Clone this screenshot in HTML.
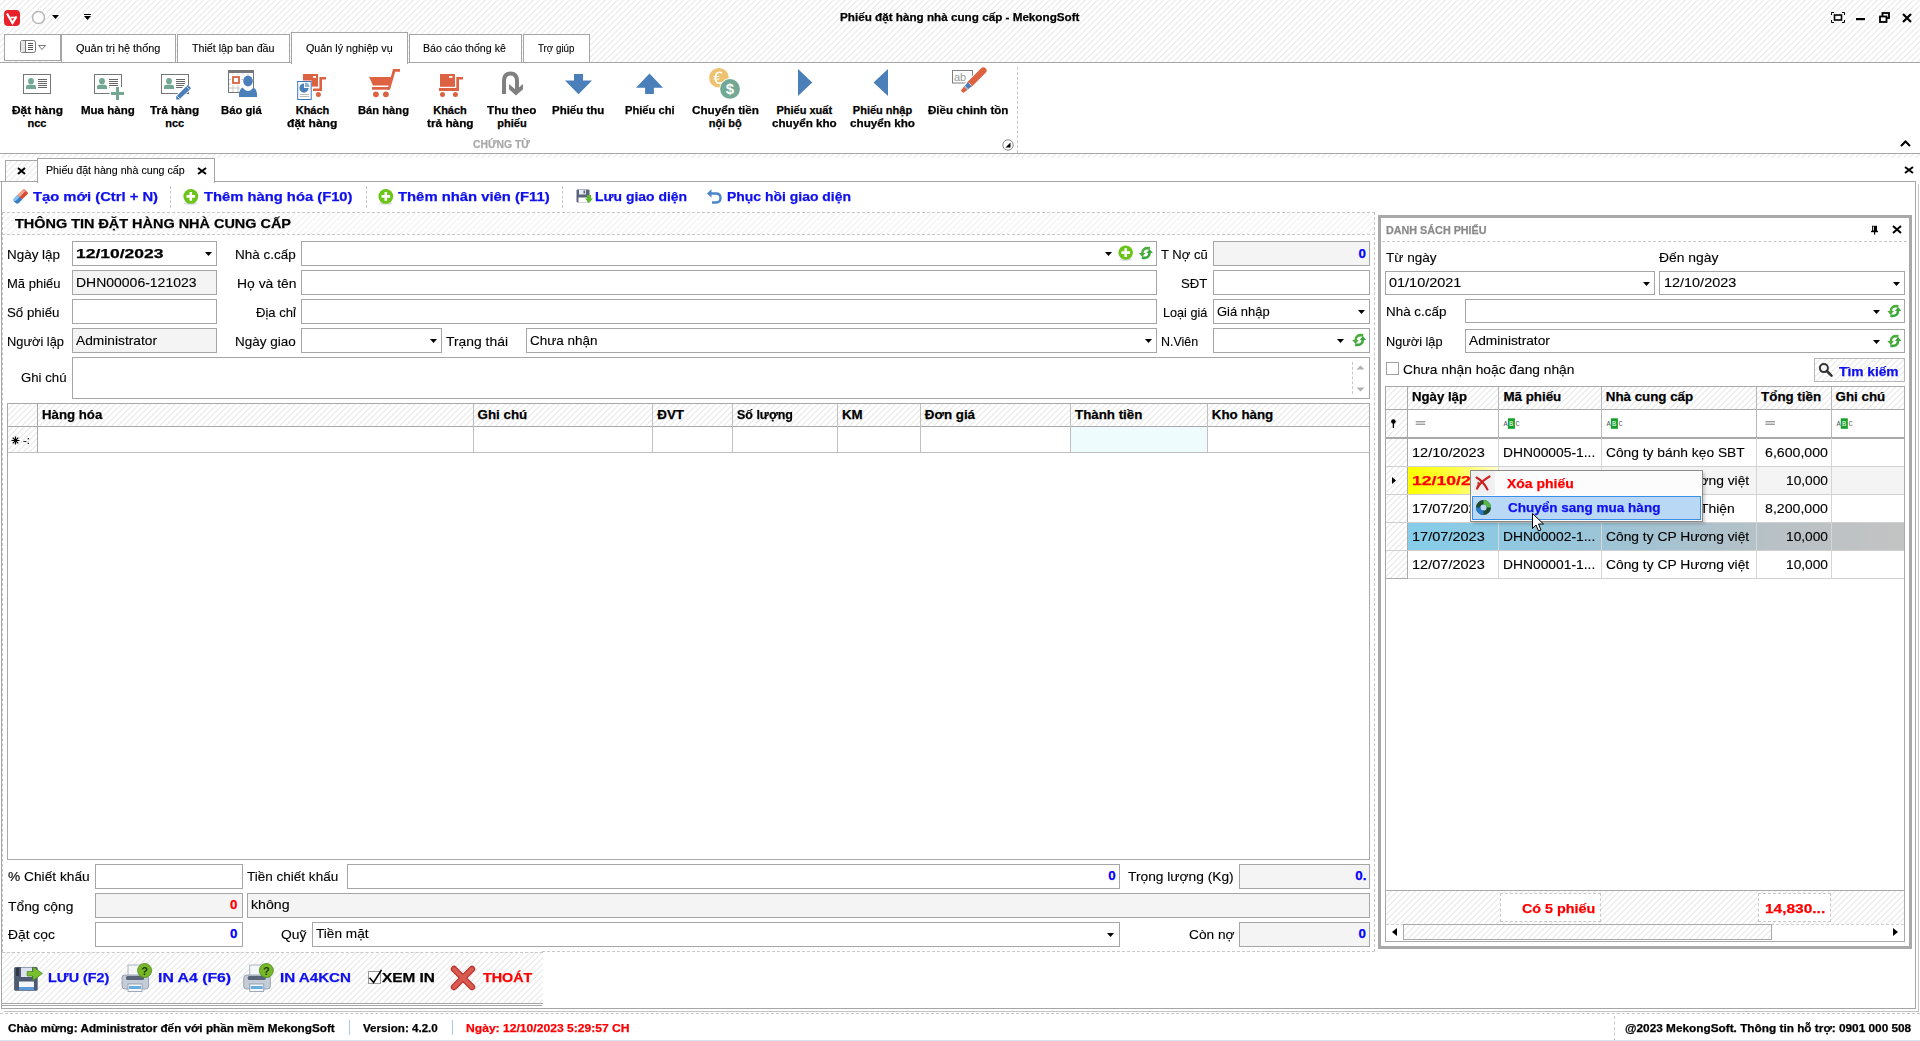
<!DOCTYPE html><html><head><meta charset="utf-8"><title>MekongSoft</title><style>
html,body{margin:0;padding:0;}
body{width:1920px;height:1041px;position:relative;overflow:hidden;background:#fff;font-family:'Liberation Sans', sans-serif;}
body>*{position:absolute;box-sizing:border-box;}
.t{white-space:pre;line-height:1;-webkit-text-stroke:0.12px currentColor;}
.b{-webkit-text-stroke:0.25px currentColor;}
.hatchxl{background-color:#fff;background-image:repeating-linear-gradient(135deg,rgba(255,255,255,0) 0px,rgba(255,255,255,0) 3.4px,#f4f4f4 3.4px,#f4f4f4 4.243px);}
.hatchd{background-color:#fff;background-image:repeating-linear-gradient(135deg,rgba(255,255,255,0) 0px,rgba(255,255,255,0) 3.4px,#e2e2e2 3.4px,#e2e2e2 4.243px);}
.hatch{background-color:#fff;background-image:repeating-linear-gradient(135deg,rgba(255,255,255,0) 0px,rgba(255,255,255,0) 3.4px,#efefef 3.4px,#efefef 4.243px);}
.hatchl{background-color:#fff;background-image:repeating-linear-gradient(135deg,rgba(255,255,255,0) 0px,rgba(255,255,255,0) 3.4px,#eeeeee 3.4px,#eeeeee 4.243px);}
</style></head><body>
<div style="left:0px;top:0px;width:1920px;height:62px;background:#fff;"></div>
<div class="hatch" style="left:0;top:0;width:1920px;height:62px"></div>
<svg style="left:4px;top:10px" width="16" height="16" viewBox="0 0 16 16"><rect x="0" y="0" width="16" height="16" rx="4" fill="#e8202a"/><path d="M3 3.5L8.5 13L12.5 6.5" stroke="#fff" stroke-width="2.2" fill="none"/><path d="M6.5 7.5H12.5" stroke="#fff" stroke-width="1.6"/></svg>
<svg style="left:31px;top:10px" width="15" height="15" viewBox="0 0 15 15"><circle cx="7.5" cy="7.5" r="6" fill="#fff" stroke="#b8b8b8" stroke-width="1.6"/></svg>
<svg style="left:52px;top:15px" width="7" height="4" viewBox="0 0 7 4"><path d="M0 0H7L3.5 4Z" fill="#000"/></svg>
<svg style="left:84px;top:14px" width="7" height="6" viewBox="0 0 7 6"><path d="M0 0H7V1H0Z M0 2H7L3.5 6Z" fill="#000"/></svg>
<span class="t b" style="left:839.70px;top:11.99px;font-size:11px;font-weight:700;color:#000;transform:scaleX(1.0620);transform-origin:0 0;">Phiếu đặt hàng nhà cung cấp - MekongSoft</span>
<svg style="left:1831px;top:12px" width="14" height="11" viewBox="0 0 14 11"><path d="M0.5 3V0.5H3 M11 0.5H13.5V3 M13.5 8V10.5H11 M3 10.5H0.5V8" stroke="#000" fill="none"/><rect x="3.5" y="3" width="7" height="5" fill="none" stroke="#000" stroke-width="1.6"/></svg>
<svg style="left:1856px;top:18px" width="10" height="3" viewBox="0 0 10 3"><rect x="0" y="0" width="9" height="2.2" fill="#000"/></svg>
<svg style="left:1879px;top:12px" width="11" height="11" viewBox="0 0 11 11"><rect x="3.5" y="1" width="6.5" height="5" fill="none" stroke="#000" stroke-width="1.8"/><rect x="1" y="4.5" width="6.5" height="5.5" fill="#fff" stroke="#000" stroke-width="1.8"/></svg>
<svg style="left:1902px;top:13px" width="10" height="10" viewBox="0 0 10 10"><path d="M1 1L9 9M9 1L1 9" stroke="#000" stroke-width="2.2"/></svg>
<div style="left:4px;top:34px;width:57px;height:27px;border:1px solid #a6a6a6;background:#fff;"></div>
<svg style="left:20px;top:40px" width="17" height="13" viewBox="0 0 17 13"><rect x="0.5" y="0.5" width="15" height="12" rx="2" fill="#fff" stroke="#777"/><path d="M5.5 0.5V12.5" stroke="#777"/><rect x="1" y="1" width="4" height="11" fill="#e6e6e6"/><path d="M8 3.5H13M8 5.5H13M8 7.5H13M8 9.5H13" stroke="#555"/></svg>
<svg style="left:38px;top:45px" width="8" height="5" viewBox="0 0 8 5"><path d="M0.5 0.5H7.5L4 4.5Z" fill="#fff" stroke="#777"/></svg>
<div style="left:61px;top:34px;width:115px;height:29px;border:1px solid #a6a6a6;background:#fff;"></div>
<div style="left:177px;top:34px;width:113px;height:29px;border:1px solid #a6a6a6;background:#fff;"></div>
<div style="left:409px;top:34px;width:113px;height:29px;border:1px solid #a6a6a6;background:#fff;"></div>
<div style="left:523px;top:34px;width:67px;height:29px;border:1px solid #a6a6a6;background:#fff;"></div>
<div style="left:0px;top:62px;width:1920px;height:0;border-top:1px solid #a6a6a6"></div>
<div style="left:291px;top:32px;width:117px;height:32px;border:1px solid #a6a6a6;background:#fff;border-bottom:none;"></div>
<span class="t" style="left:75.50px;top:43.19px;font-size:11px;font-weight:400;color:#000;transform:scaleX(0.9928);transform-origin:0 0;">Quản trị hệ thống</span>
<span class="t" style="left:191.70px;top:43.19px;font-size:11px;font-weight:400;color:#000;transform:scaleX(0.9704);transform-origin:0 0;">Thiết lập ban đầu</span>
<span class="t" style="left:305.80px;top:43.19px;font-size:11px;font-weight:400;color:#000;transform:scaleX(0.9778);transform-origin:0 0;">Quản lý nghiệp vụ</span>
<span class="t" style="left:423.30px;top:43.19px;font-size:11px;font-weight:400;color:#000;transform:scaleX(0.9682);transform-origin:0 0;">Báo cáo thống kê</span>
<span class="t" style="left:537.80px;top:43.19px;font-size:11px;font-weight:400;color:#000;transform:scaleX(0.8868);transform-origin:0 0;">Trợ giúp</span>
<div style="left:0px;top:153px;width:1920px;height:0;border-top:1px solid #a6a6a6"></div>
<div style="left:1017px;top:67px;width:0;height:86px;border-left:1px dashed #c8c8c8"></div>
<span class="t b" style="left:473.20px;top:138.69px;font-size:11px;font-weight:700;color:#a9a9a9;transform:scaleX(0.9417);transform-origin:0 0;">CHỨNG TỪ</span>
<svg style="left:1002px;top:139px" width="12" height="12" viewBox="0 0 12 12"><circle cx="6" cy="6" r="5.2" fill="#fff" stroke="#888"/><path d="M3.5 8.5H8.5V3.5Z" fill="#000"/></svg>
<svg style="left:1900px;top:140px" width="11" height="7" viewBox="0 0 11 7"><path d="M1 6L5.5 1.5L10 6" stroke="#000" stroke-width="2" fill="none"/></svg>
<span class="t b" style="left:11.50px;top:105.29px;font-size:11px;font-weight:700;color:#000;transform:scaleX(1.0837);transform-origin:0 0;">Đặt hàng</span>
<span class="t b" style="left:27.52px;top:118.29px;font-size:11px;font-weight:700;color:#000;">ncc</span>
<span class="t b" style="left:80.65px;top:105.29px;font-size:11px;font-weight:700;color:#000;transform:scaleX(1.0459);transform-origin:0 0;">Mua hàng</span>
<span class="t b" style="left:150.05px;top:105.29px;font-size:11px;font-weight:700;color:#000;transform:scaleX(1.0754);transform-origin:0 0;">Trả hàng</span>
<span class="t b" style="left:165.22px;top:118.29px;font-size:11px;font-weight:700;color:#000;">ncc</span>
<span class="t b" style="left:220.95px;top:105.29px;font-size:11px;font-weight:700;color:#000;transform:scaleX(1.0243);transform-origin:0 0;">Báo giá</span>
<span class="t b" style="left:295.69px;top:105.29px;font-size:11px;font-weight:700;color:#000;">Khách</span>
<span class="t b" style="left:287.30px;top:118.29px;font-size:11px;font-weight:700;color:#000;transform:scaleX(1.0994);transform-origin:0 0;">đặt hàng</span>
<span class="t b" style="left:358.30px;top:105.29px;font-size:11px;font-weight:700;color:#000;transform:scaleX(1.0175);transform-origin:0 0;">Bán hàng</span>
<span class="t b" style="left:433.19px;top:105.29px;font-size:11px;font-weight:700;color:#000;">Khách</span>
<span class="t b" style="left:426.70px;top:118.29px;font-size:11px;font-weight:700;color:#000;transform:scaleX(1.0736);transform-origin:0 0;">trả hàng</span>
<span class="t b" style="left:487.30px;top:105.29px;font-size:11px;font-weight:700;color:#000;transform:scaleX(1.0638);transform-origin:0 0;">Thu theo</span>
<span class="t b" style="left:497.33px;top:118.29px;font-size:11px;font-weight:700;color:#000;">phiếu</span>
<span class="t b" style="left:552.05px;top:105.29px;font-size:11px;font-weight:700;color:#000;transform:scaleX(1.0437);transform-origin:0 0;">Phiếu thu</span>
<span class="t b" style="left:625.20px;top:105.29px;font-size:11px;font-weight:700;color:#000;transform:scaleX(1.0142);transform-origin:0 0;">Phiếu chi</span>
<span class="t b" style="left:691.70px;top:105.29px;font-size:11px;font-weight:700;color:#000;transform:scaleX(1.0643);transform-origin:0 0;">Chuyển tiền</span>
<span class="t b" style="left:708.70px;top:118.29px;font-size:11px;font-weight:700;color:#000;">nội bộ</span>
<span class="t b" style="left:776.49px;top:105.29px;font-size:11px;font-weight:700;color:#000;">Phiếu xuất</span>
<span class="t b" style="left:771.95px;top:118.29px;font-size:11px;font-weight:700;color:#000;transform:scaleX(1.0585);transform-origin:0 0;">chuyển kho</span>
<span class="t b" style="left:852.86px;top:105.29px;font-size:11px;font-weight:700;color:#000;">Phiếu nhập</span>
<span class="t b" style="left:850.00px;top:118.29px;font-size:11px;font-weight:700;color:#000;transform:scaleX(1.0634);transform-origin:0 0;">chuyển kho</span>
<span class="t b" style="left:928.30px;top:105.29px;font-size:11px;font-weight:700;color:#000;transform:scaleX(1.0525);transform-origin:0 0;">Điều chinh tồn</span>
<div class="hatchl" style="left:0;top:154px;width:1920px;height:4px"></div>
<div class="hatch" style="left:5px;top:160px;width:33px;height:22px;border:1px solid #a6a6a6;border-bottom:none"></div>
<svg style="left:17px;top:167px" width="9" height="8" viewBox="0 0 9 8"><path d="M1 1L8 7M8 1L1 7" stroke="#000" stroke-width="2"/></svg>
<div style="left:37px;top:158px;width:178px;height:25px;border:1px solid #a6a6a6;background:#fff;border-bottom:none;"></div>
<span class="t" style="left:46.30px;top:164.89px;font-size:11px;font-weight:400;color:#000;transform:scaleX(0.9691);transform-origin:0 0;">Phiếu đặt hàng nhà cung cấp</span>
<svg style="left:197px;top:167px" width="10" height="8" viewBox="0 0 10 8"><path d="M1 1L9 7M9 1L1 7" stroke="#000" stroke-width="2"/></svg>
<svg style="left:1904px;top:166px" width="10" height="8" viewBox="0 0 10 8"><path d="M1 1L9 7M9 1L1 7" stroke="#000" stroke-width="2"/></svg>
<div style="left:214px;top:181px;width:1702px;height:0;border-top:1px solid #a6a6a6"></div>
<div style="left:0px;top:181px;width:37px;height:0;border-top:1px solid #a6a6a6"></div>
<div style="left:1px;top:181px;width:0;height:827px;border-left:1px solid #a6a6a6"></div>
<div style="left:1915px;top:181px;width:0;height:827px;border-left:1px solid #a6a6a6"></div>
<div style="left:1918px;top:184px;width:0;height:827px;border-left:1px solid #c4c4c4"></div>
<div style="left:1px;top:1008px;width:1915px;height:0;border-top:1px solid #a6a6a6"></div>
<div style="left:4px;top:1011px;width:1915px;height:0;border-top:1px solid #c4c4c4"></div>
<div style="left:170px;top:186px;width:0;height:22px;border-left:1px dashed #c8c8c8"></div>
<div style="left:366px;top:186px;width:0;height:22px;border-left:1px dashed #c8c8c8"></div>
<div style="left:562px;top:186px;width:0;height:22px;border-left:1px dashed #c8c8c8"></div>
<span class="t b" style="left:32.50px;top:189.72px;font-size:13.33px;font-weight:700;color:#1010ee;transform:scaleX(1.1083);transform-origin:0 0;">Tạo mới (Ctrl + N)</span>
<span class="t b" style="left:203.70px;top:189.72px;font-size:13.33px;font-weight:700;color:#1010ee;transform:scaleX(1.1080);transform-origin:0 0;">Thêm hàng hóa (F10)</span>
<span class="t b" style="left:398.30px;top:189.72px;font-size:13.33px;font-weight:700;color:#1010ee;transform:scaleX(1.1131);transform-origin:0 0;">Thêm nhân viên (F11)</span>
<span class="t b" style="left:595.40px;top:189.72px;font-size:13.33px;font-weight:700;color:#1010ee;transform:scaleX(1.0438);transform-origin:0 0;">Lưu giao diện</span>
<span class="t b" style="left:726.80px;top:189.72px;font-size:13.33px;font-weight:700;color:#1010ee;transform:scaleX(1.0466);transform-origin:0 0;">Phục hồi giao diện</span>
<div class="hatchxl" style="left:2px;top:212px;width:1373px;height:23px;border:1px dashed #c8c8c8;border-left:none"></div>
<span class="t b" style="left:14.70px;top:217.42px;font-size:13.33px;font-weight:700;color:#000;transform:scaleX(1.0835);transform-origin:0 0;">THÔNG TIN ĐẶT HÀNG NHÀ CUNG CẤP</span>
<div style="left:2px;top:212px;width:0;height:740px;border-left:1px dashed #c8c8c8"></div>
<div style="left:1374px;top:212px;width:0;height:740px;border-left:1px dashed #c8c8c8"></div>
<div style="left:542px;top:951px;width:833px;height:0;border-top:1px dashed #c8c8c8"></div>
<span class="t" style="left:7.00px;top:247.72px;font-size:13.33px;font-weight:400;color:#000;transform:scaleX(1.0074);transform-origin:0 0;">Ngày lập</span>
<span class="t" style="left:7.00px;top:276.72px;font-size:13.33px;font-weight:400;color:#000;transform:scaleX(0.9755);transform-origin:0 0;">Mã phiếu</span>
<span class="t" style="left:7.00px;top:305.72px;font-size:13.33px;font-weight:400;color:#000;transform:scaleX(0.9976);transform-origin:0 0;">Số phiếu</span>
<span class="t" style="left:7.00px;top:334.72px;font-size:13.33px;font-weight:400;color:#000;transform:scaleX(0.9635);transform-origin:0 0;">Người lập</span>
<div style="left:72px;top:241px;width:145px;height:25px;border:1px solid #a6a6a6;background:#fff;"></div>
<div style="left:72px;top:270px;width:145px;height:25px;border:1px solid #a6a6a6;background:#f4f4f4;"></div>
<div style="left:72px;top:299px;width:145px;height:25px;border:1px solid #a6a6a6;background:#fff;"></div>
<div style="left:72px;top:328px;width:145px;height:25px;border:1px solid #a6a6a6;background:#f4f4f4;"></div>
<span class="t b" style="left:76.25px;top:246.72px;font-size:13.33px;font-weight:700;color:#000;transform:scaleX(1.3115);transform-origin:0 0;">12/10/2023</span>
<svg style="left:205.0px;top:252px" width="7" height="4" viewBox="0 0 7 4"><path d="M0 0H7L3.5 4Z" fill="#000"/></svg>
<span class="t" style="left:76.25px;top:275.52px;font-size:13.33px;font-weight:400;color:#000;transform:scaleX(1.0491);transform-origin:0 0;">DHN00006-121023</span>
<span class="t" style="left:75.75px;top:333.72px;font-size:13.33px;font-weight:400;color:#000;transform:scaleX(1.0316);transform-origin:0 0;">Administrator</span>
<span class="t" style="left:235.25px;top:247.72px;font-size:13.33px;font-weight:400;color:#000;transform:scaleX(1.0122);transform-origin:0 0;">Nhà c.cấp</span>
<span class="t" style="left:236.50px;top:276.72px;font-size:13.33px;font-weight:400;color:#000;transform:scaleX(1.0427);transform-origin:0 0;">Họ và tên</span>
<span class="t" style="left:256.00px;top:305.72px;font-size:13.33px;font-weight:400;color:#000;transform:scaleX(0.9816);transform-origin:0 0;">Địa chỉ</span>
<span class="t" style="left:235.25px;top:334.72px;font-size:13.33px;font-weight:400;color:#000;transform:scaleX(1.0120);transform-origin:0 0;">Ngày giao</span>
<div style="left:301px;top:241px;width:856px;height:25px;border:1px solid #a6a6a6;background:#fff;"></div>
<div style="left:301px;top:270px;width:856px;height:25px;border:1px solid #a6a6a6;background:#fff;"></div>
<div style="left:301px;top:299px;width:856px;height:25px;border:1px solid #a6a6a6;background:#fff;"></div>
<div style="left:301px;top:328px;width:141px;height:25px;border:1px solid #a6a6a6;background:#fff;"></div>
<svg style="left:1104.9px;top:252px" width="7" height="4" viewBox="0 0 7 4"><path d="M0 0H7L3.5 4Z" fill="#000"/></svg>
<svg style="left:429.5px;top:339px" width="7" height="4" viewBox="0 0 7 4"><path d="M0 0H7L3.5 4Z" fill="#000"/></svg>
<span class="t" style="left:446.00px;top:334.72px;font-size:13.33px;font-weight:400;color:#000;transform:scaleX(1.0417);transform-origin:0 0;">Trạng thái</span>
<div style="left:526px;top:328px;width:631px;height:25px;border:1px solid #a6a6a6;background:#fff;"></div>
<span class="t" style="left:530.00px;top:333.72px;font-size:13.33px;font-weight:400;color:#000;transform:scaleX(1.0115);transform-origin:0 0;">Chưa nhận</span>
<svg style="left:1144.5px;top:339px" width="7" height="4" viewBox="0 0 7 4"><path d="M0 0H7L3.5 4Z" fill="#000"/></svg>
<span class="t" style="left:1160.70px;top:247.72px;font-size:13.33px;font-weight:400;color:#000;transform:scaleX(0.9780);transform-origin:0 0;">T Nợ cũ</span>
<span class="t" style="left:1181.00px;top:276.72px;font-size:13.33px;font-weight:400;color:#000;transform:scaleX(0.9898);transform-origin:0 0;">SĐT</span>
<span class="t" style="left:1163.30px;top:305.72px;font-size:13.33px;font-weight:400;color:#000;transform:scaleX(0.9485);transform-origin:0 0;">Loại giá</span>
<span class="t" style="left:1161.30px;top:334.72px;font-size:13.33px;font-weight:400;color:#000;transform:scaleX(0.9355);transform-origin:0 0;">N.Viên</span>
<div style="left:1213px;top:241px;width:157px;height:25px;border:1px solid #a6a6a6;background:#f4f4f4;"></div>
<div style="left:1213px;top:270px;width:157px;height:25px;border:1px solid #a6a6a6;background:#fff;"></div>
<div style="left:1213px;top:299px;width:157px;height:25px;border:1px solid #a6a6a6;background:#fff;"></div>
<div style="left:1213px;top:328px;width:157px;height:25px;border:1px solid #a6a6a6;background:#fff;"></div>
<span class="t b" style="left:1358.58px;top:246.72px;font-size:13.33px;font-weight:700;color:#0000ff;">0</span>
<span class="t" style="left:1217.10px;top:304.72px;font-size:13.33px;font-weight:400;color:#000;transform:scaleX(0.9724);transform-origin:0 0;">Giá nhập</span>
<svg style="left:1357.5px;top:310px" width="7" height="4" viewBox="0 0 7 4"><path d="M0 0H7L3.5 4Z" fill="#000"/></svg>
<svg style="left:1337.3px;top:339px" width="7" height="4" viewBox="0 0 7 4"><path d="M0 0H7L3.5 4Z" fill="#000"/></svg>
<span class="t" style="left:20.75px;top:371.22px;font-size:13.33px;font-weight:400;color:#000;transform:scaleX(0.9905);transform-origin:0 0;">Ghi chú</span>
<div style="left:72px;top:357px;width:1298px;height:42px;border:1px solid #a6a6a6;background:#fff;"></div>
<div style="left:1352px;top:362px;width:0;height:32px;border-left:1px dashed #c8c8c8"></div>
<svg style="left:1356px;top:365px" width="9" height="5" viewBox="0 0 9 5"><path d="M0.5 4.5H8.5L4.5 0.5Z" fill="#b0b0b0"/></svg>
<svg style="left:1356px;top:387px" width="9" height="5" viewBox="0 0 9 5"><path d="M0.5 0.5H8.5L4.5 4.5Z" fill="#b0b0b0"/></svg>
<div style="left:7px;top:403px;width:1363px;height:457px;border:1px solid #a9a9a9;background:#fff;"></div>
<div class="hatchl" style="left:8px;top:404px;width:1361px;height:22px"></div>
<div class="hatchl" style="left:8px;top:426px;width:29px;height:26px"></div>
<div style="left:8px;top:426px;width:1361px;height:0;border-top:1px solid #a9a9a9"></div>
<div style="left:8px;top:452px;width:1361px;height:0;border-top:1px solid #c0c0c0"></div>
<div style="left:37px;top:404px;width:0;height:48px;border-left:1px solid #a9a9a9"></div>
<div style="left:473px;top:404px;width:0;height:48px;border-left:1px solid #c0c0c0"></div>
<div style="left:652px;top:404px;width:0;height:48px;border-left:1px solid #c0c0c0"></div>
<div style="left:732px;top:404px;width:0;height:48px;border-left:1px solid #c0c0c0"></div>
<div style="left:837px;top:404px;width:0;height:48px;border-left:1px solid #c0c0c0"></div>
<div style="left:920px;top:404px;width:0;height:48px;border-left:1px solid #c0c0c0"></div>
<div style="left:1070px;top:404px;width:0;height:48px;border-left:1px solid #c0c0c0"></div>
<div style="left:1207px;top:404px;width:0;height:48px;border-left:1px solid #c0c0c0"></div>
<div style="left:1071px;top:427px;width:136px;height:25px;background:#effcfd;"></div>
<span class="t b" style="left:42.20px;top:407.52px;font-size:13.33px;font-weight:700;color:#000;transform:scaleX(0.9931);transform-origin:0 0;">Hàng hóa</span>
<span class="t b" style="left:477.60px;top:407.52px;font-size:13.33px;font-weight:700;color:#000;">Ghi chú</span>
<span class="t b" style="left:657.30px;top:407.52px;font-size:13.33px;font-weight:700;color:#000;">ĐVT</span>
<span class="t b" style="left:736.70px;top:407.52px;font-size:13.33px;font-weight:700;color:#000;transform:scaleX(0.9355);transform-origin:0 0;">Số lượng</span>
<span class="t b" style="left:841.90px;top:407.52px;font-size:13.33px;font-weight:700;color:#000;">KM</span>
<span class="t b" style="left:924.80px;top:407.52px;font-size:13.33px;font-weight:700;color:#000;">Đơn giá</span>
<span class="t b" style="left:1075.00px;top:407.52px;font-size:13.33px;font-weight:700;color:#000;">Thành tiền</span>
<span class="t b" style="left:1211.80px;top:407.52px;font-size:13.33px;font-weight:700;color:#000;">Kho hàng</span>
<svg style="left:11px;top:436px" width="9" height="9" viewBox="0 0 9 9"><path d="M4.5 0.5V8.5M0.5 4.5H8.5M1.7 1.7L7.3 7.3M7.3 1.7L1.7 7.3" stroke="#000" stroke-width="1.2"/></svg>
<span class="t" style="left:23.00px;top:435.19px;font-size:11px;font-weight:400;color:#000;transform:scaleX(1.0394);transform-origin:0 0;">-:</span>
<span class="t" style="left:7.90px;top:870.42px;font-size:13.33px;font-weight:400;color:#000;transform:scaleX(1.0305);transform-origin:0 0;">% Chiết khấu</span>
<span class="t" style="left:7.90px;top:899.52px;font-size:13.33px;font-weight:400;color:#000;transform:scaleX(1.0384);transform-origin:0 0;">Tổng cộng</span>
<span class="t" style="left:7.90px;top:928.32px;font-size:13.33px;font-weight:400;color:#000;transform:scaleX(1.0379);transform-origin:0 0;">Đặt cọc</span>
<div style="left:95px;top:864px;width:148px;height:25px;border:1px solid #a6a6a6;background:#fff;"></div>
<div style="left:95px;top:893px;width:148px;height:25px;border:1px solid #a6a6a6;background:#f4f4f4;"></div>
<div style="left:95px;top:922px;width:148px;height:25px;border:1px solid #a6a6a6;background:#fff;"></div>
<span class="t b" style="left:230.08px;top:898.22px;font-size:13.33px;font-weight:700;color:#ff0000;">0</span>
<span class="t b" style="left:230.08px;top:927.22px;font-size:13.33px;font-weight:700;color:#0000ff;">0</span>
<span class="t" style="left:247.30px;top:870.42px;font-size:13.33px;font-weight:400;color:#000;transform:scaleX(1.0144);transform-origin:0 0;">Tiền chiết khấu</span>
<div style="left:347px;top:864px;width:773px;height:25px;border:1px solid #a6a6a6;background:#fff;"></div>
<span class="t b" style="left:1108.18px;top:869.22px;font-size:13.33px;font-weight:700;color:#0000ff;">0</span>
<div style="left:247px;top:893px;width:1123px;height:25px;border:1px solid #a6a6a6;background:#f4f4f4;"></div>
<span class="t" style="left:251.00px;top:898.22px;font-size:13.33px;font-weight:400;color:#000;transform:scaleX(1.0625);transform-origin:0 0;">không</span>
<span class="t" style="left:281.30px;top:928.32px;font-size:13.33px;font-weight:400;color:#000;transform:scaleX(1.0387);transform-origin:0 0;">Quỹ</span>
<div style="left:312px;top:922px;width:808px;height:25px;border:1px solid #a6a6a6;background:#fff;"></div>
<span class="t" style="left:316.25px;top:927.22px;font-size:13.33px;font-weight:400;color:#000;transform:scaleX(1.0222);transform-origin:0 0;">Tiền mặt</span>
<svg style="left:1107.4px;top:933px" width="7" height="4" viewBox="0 0 7 4"><path d="M0 0H7L3.5 4Z" fill="#000"/></svg>
<span class="t" style="left:1128.40px;top:870.42px;font-size:13.33px;font-weight:400;color:#000;transform:scaleX(1.0326);transform-origin:0 0;">Trọng lượng (Kg)</span>
<div style="left:1239px;top:864px;width:131px;height:25px;border:1px solid #a6a6a6;background:#f4f4f4;"></div>
<span class="t b" style="left:1355.28px;top:869.22px;font-size:13.33px;font-weight:700;color:#0000ff;">0.</span>
<span class="t" style="left:1188.50px;top:928.32px;font-size:13.33px;font-weight:400;color:#000;transform:scaleX(1.0268);transform-origin:0 0;">Còn nợ</span>
<div style="left:1239px;top:922px;width:131px;height:25px;border:1px solid #a6a6a6;background:#f4f4f4;"></div>
<span class="t b" style="left:1358.58px;top:927.22px;font-size:13.33px;font-weight:700;color:#0000ff;">0</span>
<div class="hatchl" style="left:2px;top:952px;width:541px;height:52px;border-top:1px dashed #c8c8c8;border-bottom:1px solid #a6a6a6"></div>
<div style="left:2px;top:1005px;width:540px;height:0;border-top:1px solid #a6a6a6"></div>
<span class="t b" style="left:47.50px;top:971.42px;font-size:13.33px;font-weight:700;color:#1010ee;transform:scaleX(1.0752);transform-origin:0 0;">LƯU (F2)</span>
<span class="t b" style="left:157.70px;top:971.42px;font-size:13.33px;font-weight:700;color:#1010ee;transform:scaleX(1.1844);transform-origin:0 0;">IN A4 (F6)</span>
<span class="t b" style="left:279.60px;top:971.42px;font-size:13.33px;font-weight:700;color:#1010ee;transform:scaleX(1.1369);transform-origin:0 0;">IN A4KCN</span>
<span class="t b" style="left:381.70px;top:971.42px;font-size:13.33px;font-weight:700;color:#000;transform:scaleX(1.1520);transform-origin:0 0;">XEM IN</span>
<span class="t b" style="left:483.00px;top:971.42px;font-size:13.33px;font-weight:700;color:#ff0000;transform:scaleX(1.0739);transform-origin:0 0;">THOÁT</span>
<div style="left:0px;top:1013px;width:1920px;height:0;border-top:1px dashed #c8c8c8"></div>
<span class="t b" style="left:8.00px;top:1022.69px;font-size:11px;font-weight:700;color:#000;transform:scaleX(1.0645);transform-origin:0 0;">Chào mừng: Administrator đến với phần mềm MekongSoft</span>
<div style="left:349px;top:1020px;width:0;height:15px;border-left:1px solid #a8c8e8"></div>
<span class="t b" style="left:362.70px;top:1022.69px;font-size:11px;font-weight:700;color:#000;transform:scaleX(1.0544);transform-origin:0 0;">Version: 4.2.0</span>
<div style="left:452px;top:1020px;width:0;height:15px;border-left:1px solid #a8c8e8"></div>
<span class="t b" style="left:466.00px;top:1022.69px;font-size:11px;font-weight:700;color:#ff0000;transform:scaleX(1.1010);transform-origin:0 0;">Ngày: 12/10/2023 5:29:57 CH</span>
<div style="left:1614px;top:1016px;width:0;height:25px;border-left:1px dashed #c8c8c8"></div>
<span class="t b" style="left:1624.60px;top:1022.69px;font-size:11px;font-weight:700;color:#000;transform:scaleX(1.0730);transform-origin:0 0;">@2023 MekongSoft. Thông tin hỗ trợ: 0901 000 508</span>
<div style="left:0px;top:1040px;width:1920px;height:0;border-top:1px solid #d4e4ee"></div>
<div style="left:1378px;top:215px;width:534px;height:734px;border:1px solid #a9a9a9;background:#fff;border-width:3px;"></div>
<span class="t b" style="left:1386.25px;top:224.99px;font-size:11px;font-weight:700;color:#8a8a8a;transform:scaleX(0.9797);transform-origin:0 0;">DANH SÁCH PHIẾU</span>
<div style="left:1382px;top:241px;width:525px;height:0;border-top:1px dashed #c8c8c8"></div>
<svg style="left:1870px;top:225px" width="9" height="10" viewBox="0 0 9 10"><rect x="2" y="0.8" width="5" height="5.6" fill="#000"/><rect x="2.9" y="1.5" width="0.9" height="4" fill="#fff"/><rect x="1" y="5.8" width="7" height="1.4" fill="#000"/><rect x="4" y="7" width="1.2" height="2.6" fill="#000"/></svg>
<svg style="left:1892px;top:225px" width="10" height="9" viewBox="0 0 10 9"><path d="M1 1L9 8M9 1L1 8" stroke="#000" stroke-width="2"/></svg>
<span class="t" style="left:1385.50px;top:251.02px;font-size:13.33px;font-weight:400;color:#000;transform:scaleX(1.0187);transform-origin:0 0;">Từ ngày</span>
<span class="t" style="left:1659.20px;top:251.02px;font-size:13.33px;font-weight:400;color:#000;transform:scaleX(1.0427);transform-origin:0 0;">Đến ngày</span>
<div style="left:1385px;top:271px;width:270px;height:24px;border:1px solid #a6a6a6;background:#fff;"></div>
<div style="left:1659px;top:271px;width:246px;height:24px;border:1px solid #a6a6a6;background:#fff;"></div>
<span class="t" style="left:1389.20px;top:276.12px;font-size:13.33px;font-weight:400;color:#000;transform:scaleX(1.0852);transform-origin:0 0;">01/10/2021</span>
<span class="t" style="left:1664.00px;top:276.12px;font-size:13.33px;font-weight:400;color:#000;transform:scaleX(1.0829);transform-origin:0 0;">12/10/2023</span>
<svg style="left:1643.1px;top:282px" width="7" height="4" viewBox="0 0 7 4"><path d="M0 0H7L3.5 4Z" fill="#000"/></svg>
<svg style="left:1892.7px;top:282px" width="7" height="4" viewBox="0 0 7 4"><path d="M0 0H7L3.5 4Z" fill="#000"/></svg>
<span class="t" style="left:1385.50px;top:305.22px;font-size:13.33px;font-weight:400;color:#000;transform:scaleX(1.0064);transform-origin:0 0;">Nhà c.cấp</span>
<span class="t" style="left:1385.50px;top:334.82px;font-size:13.33px;font-weight:400;color:#000;transform:scaleX(0.9551);transform-origin:0 0;">Người lập</span>
<div style="left:1465px;top:299px;width:440px;height:24px;border:1px solid #a6a6a6;background:#fff;"></div>
<div style="left:1465px;top:329px;width:440px;height:24px;border:1px solid #a6a6a6;background:#fff;"></div>
<span class="t" style="left:1469.00px;top:334.22px;font-size:13.33px;font-weight:400;color:#000;transform:scaleX(1.0304);transform-origin:0 0;">Administrator</span>
<svg style="left:1872.8px;top:310px" width="7" height="4" viewBox="0 0 7 4"><path d="M0 0H7L3.5 4Z" fill="#000"/></svg>
<svg style="left:1872.8px;top:340px" width="7" height="4" viewBox="0 0 7 4"><path d="M0 0H7L3.5 4Z" fill="#000"/></svg>
<div style="left:1386px;top:362px;width:13px;height:13px;border:1px solid #a0a0a0;background:#fff;"></div>
<span class="t" style="left:1403.30px;top:362.62px;font-size:13.33px;font-weight:400;color:#000;transform:scaleX(1.0322);transform-origin:0 0;">Chưa nhận hoặc đang nhận</span>
<div class="hatchl" style="left:1814px;top:358px;width:91px;height:24px;border:1px solid #b8b8b8"></div>
<span class="t b" style="left:1839.00px;top:365.12px;font-size:13.33px;font-weight:700;color:#1010ee;transform:scaleX(1.0315);transform-origin:0 0;">Tìm kiếm</span>
<div style="left:1385px;top:386px;width:520px;height:556px;border:1px solid #a9a9a9;background:#fff;"></div>
<div class="hatchl" style="left:1386px;top:387px;width:518px;height:22px"></div>
<div class="hatchl" style="left:1386px;top:409px;width:21px;height:169px"></div>
<div style="left:1408px;top:467px;width:496px;height:27px;background:#f4f4f4;"></div>
<div style="left:1408px;top:467px;width:90px;height:27px;background:linear-gradient(90deg,#ffff00 0%,#ffff40 50%,#ffffc8 100%);"></div>
<div style="left:1408px;top:523px;width:496px;height:27px;background:linear-gradient(90deg,#85cdea 0%,#93c7de 25%,#a8c2cf 55%,#b9c1c5 75%,#c3c3c3 100%)"></div>
<div style="left:1386px;top:409px;width:518px;height:0;border-top:1px solid #a9a9a9"></div>
<div style="left:1386px;top:437px;width:518px;height:0;border-top:2px solid #a9a9a9"></div>
<div style="left:1407px;top:387px;width:0;height:50px;border-left:1px solid #b8b8b8"></div>
<div style="left:1407px;top:438px;width:0;height:140px;border-left:1px solid #d6d6d6"></div>
<div style="left:1498px;top:387px;width:0;height:50px;border-left:1px solid #b8b8b8"></div>
<div style="left:1498px;top:438px;width:0;height:140px;border-left:1px solid #d6d6d6"></div>
<div style="left:1601px;top:387px;width:0;height:50px;border-left:1px solid #b8b8b8"></div>
<div style="left:1601px;top:438px;width:0;height:140px;border-left:1px solid #d6d6d6"></div>
<div style="left:1756px;top:387px;width:0;height:50px;border-left:1px solid #b8b8b8"></div>
<div style="left:1756px;top:438px;width:0;height:140px;border-left:1px solid #d6d6d6"></div>
<div style="left:1831px;top:387px;width:0;height:50px;border-left:1px solid #b8b8b8"></div>
<div style="left:1831px;top:438px;width:0;height:140px;border-left:1px solid #d6d6d6"></div>
<div style="left:1407px;top:387px;width:0;height:191px;border-left:1px solid #a9a9a9"></div>
<div style="left:1386px;top:466px;width:518px;height:0;border-top:1px solid #d0d0d0"></div>
<div style="left:1386px;top:494px;width:518px;height:0;border-top:1px solid #d0d0d0"></div>
<div style="left:1386px;top:522px;width:518px;height:0;border-top:1px solid #d0d0d0"></div>
<div style="left:1386px;top:550px;width:518px;height:0;border-top:1px solid #d0d0d0"></div>
<div style="left:1386px;top:578px;width:518px;height:0;border-top:1px solid #d0d0d0"></div>
<div style="left:1386px;top:578px;width:22px;height:0;border-top:1px solid #a9a9a9"></div>
<span class="t b" style="left:1412.00px;top:390.32px;font-size:13.33px;font-weight:700;color:#000;transform:scaleX(0.9899);transform-origin:0 0;">Ngày lập</span>
<span class="t b" style="left:1503.50px;top:390.32px;font-size:13.33px;font-weight:700;color:#000;">Mã phiếu</span>
<span class="t b" style="left:1605.75px;top:390.32px;font-size:13.33px;font-weight:700;color:#000;">Nhà cung cấp</span>
<span class="t b" style="left:1761.10px;top:390.32px;font-size:13.33px;font-weight:700;color:#000;">Tổng tiền</span>
<span class="t b" style="left:1835.60px;top:390.32px;font-size:13.33px;font-weight:700;color:#000;">Ghi chú</span>
<span class="t" style="left:1412.40px;top:445.52px;font-size:13.33px;font-weight:400;color:#000;transform:scaleX(1.0911);transform-origin:0 0;">12/10/2023</span>
<span class="t" style="left:1503.20px;top:445.52px;font-size:13.33px;font-weight:400;color:#000;transform:scaleX(1.0382);transform-origin:0 0;">DHN00005-1...</span>
<span class="t" style="left:1605.80px;top:445.52px;font-size:13.33px;font-weight:400;color:#000;transform:scaleX(1.0342);transform-origin:0 0;">Công ty bánh kẹo SBT</span>
<span class="t" style="left:1764.60px;top:445.52px;font-size:13.33px;font-weight:400;color:#000;transform:scaleX(1.0625);transform-origin:0 0;">6,600,000</span>
<span class="t b" style="left:1412.40px;top:473.52px;font-size:13.33px;font-weight:700;color:#ff0000;transform:scaleX(1.3190);transform-origin:0 0;">12/10/2023</span>
<span class="t" style="left:1503.20px;top:473.52px;font-size:13.33px;font-weight:400;color:#000;transform:scaleX(1.0382);transform-origin:0 0;">DHN00004-1...</span>
<span class="t" style="left:1605.80px;top:473.52px;font-size:13.33px;font-weight:400;color:#000;transform:scaleX(1.0364);transform-origin:0 0;">Công ty CP Hương việt</span>
<span class="t" style="left:1785.60px;top:473.52px;font-size:13.33px;font-weight:400;color:#000;transform:scaleX(1.0303);transform-origin:0 0;">10,000</span>
<span class="t" style="left:1412.40px;top:501.52px;font-size:13.33px;font-weight:400;color:#000;transform:scaleX(1.0911);transform-origin:0 0;">17/07/2023</span>
<span class="t" style="left:1503.20px;top:501.52px;font-size:13.33px;font-weight:400;color:#000;transform:scaleX(1.0382);transform-origin:0 0;">DHN00003-1...</span>
<span class="t" style="left:1605.80px;top:501.52px;font-size:13.33px;font-weight:400;color:#000;transform:scaleX(1.0379);transform-origin:0 0;">Công ty Thành Thiện</span>
<span class="t" style="left:1764.60px;top:501.52px;font-size:13.33px;font-weight:400;color:#000;transform:scaleX(1.0625);transform-origin:0 0;">8,200,000</span>
<span class="t" style="left:1412.40px;top:529.52px;font-size:13.33px;font-weight:400;color:#000;transform:scaleX(1.0911);transform-origin:0 0;">17/07/2023</span>
<span class="t" style="left:1503.20px;top:529.52px;font-size:13.33px;font-weight:400;color:#000;transform:scaleX(1.0382);transform-origin:0 0;">DHN00002-1...</span>
<span class="t" style="left:1605.80px;top:529.52px;font-size:13.33px;font-weight:400;color:#000;transform:scaleX(1.0364);transform-origin:0 0;">Công ty CP Hương việt</span>
<span class="t" style="left:1785.60px;top:529.52px;font-size:13.33px;font-weight:400;color:#000;transform:scaleX(1.0303);transform-origin:0 0;">10,000</span>
<span class="t" style="left:1412.40px;top:557.52px;font-size:13.33px;font-weight:400;color:#000;transform:scaleX(1.0911);transform-origin:0 0;">12/07/2023</span>
<span class="t" style="left:1503.20px;top:557.52px;font-size:13.33px;font-weight:400;color:#000;transform:scaleX(1.0382);transform-origin:0 0;">DHN00001-1...</span>
<span class="t" style="left:1605.80px;top:557.52px;font-size:13.33px;font-weight:400;color:#000;transform:scaleX(1.0364);transform-origin:0 0;">Công ty CP Hương việt</span>
<span class="t" style="left:1785.60px;top:557.52px;font-size:13.33px;font-weight:400;color:#000;transform:scaleX(1.0303);transform-origin:0 0;">10,000</span>
<svg style="left:1392px;top:477px" width="4" height="7" viewBox="0 0 4 7"><path d="M0 0L4 3.5L0 7Z" fill="#000"/></svg>
<div class="hatchl" style="left:1386px;top:890px;width:518px;height:34px;border-top:1px solid #a9a9a9"></div>
<div style="left:1500px;top:893px;width:101px;height:29px;border:1px solid #c8c8c8;background:#fff;border-style:dashed;"></div>
<div style="left:1758px;top:893px;width:73px;height:29px;border:1px solid #c8c8c8;background:#fff;border-style:dashed;"></div>
<span class="t b" style="left:1522.10px;top:902.22px;font-size:13.33px;font-weight:700;color:#ff0000;transform:scaleX(1.0745);transform-origin:0 0;">Có 5 phiếu</span>
<span class="t b" style="left:1765.40px;top:902.22px;font-size:13.33px;font-weight:700;color:#ff0000;transform:scaleX(1.1605);transform-origin:0 0;">14,830...</span>
<div style="left:1386px;top:924px;width:518px;height:0;border-top:1px dashed #d0d0d0"></div>
<div class="hatchl" style="left:1403px;top:924px;width:369px;height:16px;border:1px solid #a9a9a9"></div>
<svg style="left:1392px;top:928px" width="5" height="8" viewBox="0 0 5 8"><path d="M5 0L0 4L5 8Z" fill="#000"/></svg>
<svg style="left:1893px;top:928px" width="5" height="8" viewBox="0 0 5 8"><path d="M0 0L5 4L0 8Z" fill="#000"/></svg>
<div style="left:1473px;top:473px;width:232px;height:51px;background:rgba(0,0,0,0.18);filter:blur(1.5px)"></div>
<div style="left:1470px;top:470px;width:233px;height:52px;border:1px solid #8a8a8a;background:#fcfcfc;"></div>
<div style="left:1471px;top:471px;width:24px;height:24px;background:#f0f0f0;"></div>
<div style="left:1472px;top:496px;width:229px;height:24px;border:1px solid #3c8ee8;background:#b9d8f5;"></div>
<svg style="left:1474px;top:474px" width="20" height="18" viewBox="0 0 20 18"><path d="M4 12.5Q8 7 15.5 2.5" stroke="#d02828" stroke-width="2.2" fill="none" stroke-linecap="round"/><path d="M3 14.5Q5.5 11 4.5 9" stroke="#d02828" stroke-width="2.2" fill="none" stroke-linecap="round"/><path d="M2.5 3.5Q9 7 13.5 15.5" stroke="#c82020" stroke-width="2" fill="none" stroke-linecap="round"/></svg>
<svg style="left:1475px;top:499px" width="17" height="17" viewBox="0 0 17 17"><circle cx="8.5" cy="8.5" r="5.3" fill="none" stroke="#1e4a30" stroke-width="4.4"/><path d="M8.5 3.2A5.3 5.3 0 0 1 13.8 8.5" stroke="#58b848" stroke-width="4.4" fill="none"/><path d="M3.2 8.5A5.3 5.3 0 0 0 8.5 13.8" stroke="#2a78c8" stroke-width="4.4" fill="none"/><circle cx="8.5" cy="8.5" r="2.6" fill="#b9d8f5"/></svg>
<span class="t b" style="left:1506.70px;top:477.42px;font-size:13.33px;font-weight:700;color:#ff0000;transform:scaleX(1.0489);transform-origin:0 0;">Xóa phiếu</span>
<span class="t b" style="left:1507.70px;top:500.82px;font-size:13.33px;font-weight:700;color:#1010ee;transform:scaleX(1.0137);transform-origin:0 0;">Chuyển sang mua hàng</span>
<svg style="left:1532px;top:513px" width="12" height="19" viewBox="0 0 12 19"><path d="M0.5 0.5V15.5L4 12L6.5 18L9 17L6.5 11H11.5Z" fill="#fff" stroke="#000" stroke-width="1"/></svg>
<svg style="left:20px;top:70px" width="36" height="28" viewBox="20 70 36 28"><rect x="23.5" y="74.5" width="27" height="19" fill="#fff" stroke="#767676"/><ellipse cx="31" cy="81.2" rx="2.9" ry="3.1" fill="#71a793"/><path d="M26 89V86.6Q26 84.9 28.5 84.7H33.5Q36 84.9 36 86.6V89Z" fill="#71a793"/><rect x="38" y="79" width="9" height="1" fill="#666"/><rect x="38" y="81" width="9" height="1" fill="#666"/><rect x="38" y="83" width="9" height="1" fill="#666"/><rect x="38" y="85" width="9" height="1" fill="#666"/><rect x="38" y="87" width="9" height="1" fill="#666"/></svg>
<svg style="left:90px;top:70px" width="36" height="32" viewBox="90 70 36 32"><rect x="94.5" y="74.5" width="27" height="19" fill="#fff" stroke="#767676"/><ellipse cx="102" cy="81.2" rx="2.9" ry="3.1" fill="#71a793"/><path d="M97 89V86.6Q97 84.9 99.5 84.7H104.5Q107 84.9 107 86.6V89Z" fill="#71a793"/><rect x="109" y="79" width="9" height="1" fill="#666"/><rect x="109" y="81" width="9" height="1" fill="#666"/><rect x="109" y="83" width="9" height="1" fill="#666"/><rect x="109" y="85" width="9" height="1" fill="#666"/><rect x="109" y="87" width="9" height="1" fill="#666"/><rect x="109.5" y="87" width="14" height="9" fill="#fff"/><rect x="111" y="92" width="13" height="3" fill="#71a793"/><rect x="116" y="87" width="3" height="13" fill="#71a793"/></svg>
<svg style="left:158px;top:70px" width="36" height="32" viewBox="158 70 36 32"><rect x="161.5" y="74.5" width="27" height="19" fill="#fff" stroke="#767676"/><ellipse cx="169" cy="81.2" rx="2.9" ry="3.1" fill="#71a793"/><path d="M164 89V86.6Q164 84.9 166.5 84.7H171.5Q174 84.9 174 86.6V89Z" fill="#71a793"/><rect x="176" y="79" width="9" height="1" fill="#666"/><rect x="176" y="81" width="9" height="1" fill="#666"/><rect x="176" y="83" width="9" height="1" fill="#666"/><rect x="176" y="85" width="9" height="1" fill="#666"/><rect x="176" y="87" width="9" height="1" fill="#666"/><path d="M186 83L192 89L179 100H175.5V96.5Z" fill="#fff"/><path d="M188.5 85.5L190.5 87.5Q191.2 88.3 190.4 89L179.2 99.6H176.2V96.6L187.2 85.5Q187.9 84.8 188.5 85.5Z" fill="#4a7fb9"/><path d="M186.5 86.5L189.3 89.3M177.2 96.2L179.8 98.8" stroke="#fff" stroke-width="0.7"/></svg>
<svg style="left:226px;top:68px" width="34" height="32" viewBox="226 68 34 32"><rect x="228.5" y="72" width="25" height="20.5" fill="#fff" stroke="#777"/><rect x="228" y="70" width="26" height="3" fill="#777"/><path d="M233 73.5V75M238 73.5V75M243 73.5V75M248 73.5V75M229 79.5H231M229 84H231M241 79.5H243M229 88H240M233 85V92M238 85V92" stroke="#bbb" stroke-width="0.8"/><rect x="233" y="77" width="6" height="6" fill="none" stroke="#dc6241" stroke-width="1.8"/><ellipse cx="248" cy="81" rx="4.8" ry="5.4" fill="#4a7fb9"/><path d="M239 97Q238.5 90 242.5 87.5Q245.5 91 248 91Q250.5 91 253.5 87.5Q257.5 90 257 97Z" fill="#4a7fb9"/></svg>
<svg style="left:295px;top:68px" width="34" height="34" viewBox="295 68 34 34"><rect x="303" y="74" width="15" height="12.6" fill="#dc6241"/><rect x="313" y="76" width="3" height="1.8" fill="#fff"/><path d="M319.4 77.1H326V79.6H322V90.9H313V88.4H319.4Z" fill="#dc6241"/><circle cx="318.4" cy="94.4" r="2.5" fill="#dc6241"/><rect x="296.7" y="80.5" width="15" height="19" fill="#fff"/><rect x="297.7" y="81.5" width="13.5" height="18" fill="#fff" stroke="#3a78c2"/><path d="M304 83.5A4.6 4.6 0 1 0 308.6 88.1H304Z" fill="#4a7fb9"/><path d="M305 82.5A4.6 4.6 0 0 1 309.6 87.1H305Z" fill="#8db0d8"/><path d="M300 94.5H309M300 96.5H309" stroke="#aaa" stroke-width="0.8"/></svg>
<svg style="left:366px;top:67px" width="36" height="32" viewBox="366 67 36 32"><path d="M369 77.1H391.5L389 85.6H373Z" fill="#dc6241"/><rect x="372" y="87" width="17" height="2.7" fill="#dc6241"/><path d="M387.5 89.7L393 69H400V71.8H395.2L390 89.7Z" fill="#dc6241"/><circle cx="375.9" cy="94.3" r="2.9" fill="#dc6241"/><circle cx="385.9" cy="94.3" r="2.9" fill="#dc6241"/></svg>
<svg style="left:436px;top:70px" width="30" height="30" viewBox="436 70 30 30"><rect x="440" y="74" width="15" height="12.8" fill="#dc6241"/><rect x="449" y="76" width="3.5" height="1.8" fill="#fff"/><path d="M456.3 77.1H463V79.6H459V90.9H439V88H456.3Z" fill="#dc6241"/><circle cx="442.5" cy="94.4" r="2.5" fill="#dc6241"/><circle cx="455.4" cy="94.4" r="2.5" fill="#dc6241"/></svg>
<svg style="left:498px;top:68px" width="30" height="32" viewBox="498 68 30 32"><path d="M504 94V81Q504 73.5 510.5 73.5Q517 73.5 517 81V90" fill="none" stroke="#808080" stroke-width="4"/><path d="M509 84L516 90L523 84V89.2L516 95.6L509 89.2Z" fill="#808080"/></svg>
<svg style="left:562px;top:70px" width="34" height="28" viewBox="562 70 34 28"><path d="M574 74H583V80.4H592L578.5 94.3L565 80.4H574Z" fill="#4a7fb9"/></svg>
<svg style="left:632px;top:70px" width="34" height="28" viewBox="632 70 34 28"><path d="M649.5 73.4L663 87.75H653.9V93.9H645.1V87.75H636Z" fill="#4a7fb9"/></svg>
<svg style="left:706px;top:66px" width="38" height="36" viewBox="706 66 38 36"><circle cx="718.9" cy="77.8" r="9.8" fill="#eec26e"/><path d="M722 73.2Q720.8 72.3 719.5 72.3Q715.5 72.3 715.5 77.8Q715.5 83.3 719.5 83.3Q720.8 83.3 722 82.4" fill="none" stroke="#fff" stroke-width="1.6"/><path d="M713.5 76.5H719.5M713.5 79H719.5" stroke="#fff" stroke-width="1.1"/><circle cx="730" cy="88.9" r="10.6" fill="#fff"/><circle cx="730" cy="88.9" r="9.9" fill="#72a894"/><text x="730" y="94.3" font-family="Liberation Sans" font-weight="700" font-size="15" fill="#fff" text-anchor="middle">$</text></svg>
<svg style="left:794px;top:66px" width="22" height="34" viewBox="794 66 22 34"><path d="M798 68.9L812.2 82.4L798 96Z" fill="#4a7fb9"/></svg>
<svg style="left:870px;top:66px" width="22" height="34" viewBox="870 66 22 34"><path d="M888 68.9L873.5 82.4L888 96Z" fill="#4a7fb9"/></svg>
<svg style="left:950px;top:66px" width="38" height="30" viewBox="950 66 38 30"><rect x="952.5" y="70.5" width="20" height="12.5" fill="#fff" stroke="#808080"/><text x="954" y="80.8" font-family="Liberation Sans" font-size="11" fill="#999">ab</text><path d="M983.6 70.4L967.6 86.4" stroke="#fff" stroke-width="8.5" stroke-linecap="round"/><path d="M983.4 70.6L970 84" stroke="#dc6241" stroke-width="6.4" stroke-linecap="round"/><path d="M970 84L965.8 88.2" stroke="#4a7fb9" stroke-width="4.8"/><path d="M964 86.6L967.4 90L963.2 93L960.9 90.7Z" fill="#dc6241"/><path d="M964.6 86L968 89.4" stroke="#fff" stroke-width="0.8"/><path d="M968.8 82.8L971.6 85.6" stroke="#fff" stroke-width="0.8"/></svg>
<svg style="left:11px;top:187px" width="20" height="19" viewBox="11 187 20 19"><g transform="translate(20.5 196.6) scale(0.8) translate(-20.6 -196.6) rotate(-45 20.6 196.6)"><rect x="10.6" y="192.6" width="9" height="8" rx="2.5" fill="#3a7cc4"/><rect x="13" y="192.6" width="7" height="8" fill="#3a7cc4"/><rect x="11.2" y="192.6" width="8.4" height="3.6" rx="1.5" fill="#8cc4f0"/><rect x="19.6" y="192.6" width="11" height="8" rx="1" fill="#d84a32"/><rect x="19.6" y="192.6" width="10.5" height="3.6" fill="#f2a890"/></g></svg>
<svg style="left:182px;top:188px" width="18" height="18" viewBox="182 188 18 18"><ellipse cx="190.8" cy="203.5" rx="6.66" ry="1.3" fill="#c8c0d0" opacity="0.6"/><circle cx="190.8" cy="196.4" r="7.4" fill="#6cc418"/><path d="M186.5 196.4H195.10000000000002M190.8 192.1V200.70000000000002" stroke="#fff" stroke-width="2.6"/></svg>
<svg style="left:377px;top:188px" width="18" height="18" viewBox="377 188 18 18"><ellipse cx="385.8" cy="203.5" rx="6.66" ry="1.3" fill="#c8c0d0" opacity="0.6"/><circle cx="385.8" cy="196.4" r="7.4" fill="#6cc418"/><path d="M381.5 196.4H390.1M385.8 192.1V200.70000000000002" stroke="#fff" stroke-width="2.6"/></svg>
<svg style="left:575px;top:188px" width="18" height="18" viewBox="575 188 18 18"><rect x="576.5" y="189.5" width="13" height="13" rx="1" fill="#5a6478"/><rect x="579" y="190" width="7" height="4.5" fill="#e8eef6"/><rect x="583.5" y="190.5" width="1.6" height="3" fill="#5a6478"/><rect x="578.5" y="197.5" width="9" height="5" fill="#fff"/><path d="M587 195H591V198.5H593L589 203L585 198.5H587Z" fill="#5cb82c"/></svg>
<svg style="left:705px;top:188px" width="18" height="17" viewBox="705 188 18 17"><path d="M710 193.5H716Q720.5 193.5 720.5 198Q720.5 202.5 716 202.5H712" fill="none" stroke="#4a86c8" stroke-width="2.4"/><path d="M707 193.5L711.5 189.3V197.7Z" fill="#4a86c8"/></svg>
<svg style="left:1116px;top:243px" width="19" height="20" viewBox="1116 243 19 20"><ellipse cx="1125.7" cy="259.5" rx="6.48" ry="1.3" fill="#c8c0d0" opacity="0.6"/><circle cx="1125.7" cy="252.6" r="7.2" fill="#6cc418"/><path d="M1121.4 252.6H1130.0M1125.7 248.29999999999998V256.9" stroke="#fff" stroke-width="2.6"/></svg>
<svg style="left:1137px;top:244px" width="18" height="18" viewBox="1137 244 18 18"><path d="M1149.9 248.4Q1142.4 247 1142.2 253.5" fill="none" stroke="#4cae3a" stroke-width="2.6"/><path d="M1138.9 253H1145.4L1142.2 257Z" fill="#4cae3a"/><path d="M1141.9 257.6Q1149.4 259 1149.6000000000001 252.5" fill="none" stroke="#3aa83a" stroke-width="2.6"/><path d="M1152.9 253H1146.4L1149.6000000000001 249Z" fill="#3aa83a"/></svg>
<svg style="left:1350px;top:330px" width="18" height="18" viewBox="1350 330 18 18"><path d="M1363.2 335.4Q1355.7 334 1355.5 340.5" fill="none" stroke="#4cae3a" stroke-width="2.6"/><path d="M1352.2 340H1358.7L1355.5 344Z" fill="#4cae3a"/><path d="M1355.2 344.6Q1362.7 346 1362.9 339.5" fill="none" stroke="#3aa83a" stroke-width="2.6"/><path d="M1366.2 340H1359.7L1362.9 336Z" fill="#3aa83a"/></svg>
<svg style="left:1885px;top:301px" width="18" height="18" viewBox="1885 301 18 18"><path d="M1898.4 306.4Q1890.9 305 1890.7 311.5" fill="none" stroke="#4cae3a" stroke-width="2.6"/><path d="M1887.4 311H1893.9L1890.7 315Z" fill="#4cae3a"/><path d="M1890.4 315.6Q1897.9 317 1898.1000000000001 310.5" fill="none" stroke="#3aa83a" stroke-width="2.6"/><path d="M1901.4 311H1894.9L1898.1000000000001 307Z" fill="#3aa83a"/></svg>
<svg style="left:1885px;top:331px" width="18" height="18" viewBox="1885 331 18 18"><path d="M1898.4 336.4Q1890.9 335 1890.7 341.5" fill="none" stroke="#4cae3a" stroke-width="2.6"/><path d="M1887.4 341H1893.9L1890.7 345Z" fill="#4cae3a"/><path d="M1890.4 345.6Q1897.9 347 1898.1000000000001 340.5" fill="none" stroke="#3aa83a" stroke-width="2.6"/><path d="M1901.4 341H1894.9L1898.1000000000001 337Z" fill="#3aa83a"/></svg>
<svg style="left:1816px;top:361px" width="18" height="18" viewBox="1816 361 18 18"><circle cx="1823.9" cy="368.1" r="4" fill="none" stroke="#333" stroke-width="2"/><path d="M1826.8 371L1831.5 375.7" stroke="#333" stroke-width="2.6" stroke-linecap="round"/></svg>
<svg style="left:1502px;top:417px" width="20" height="13" viewBox="1502 417 20 13"><text x="1503.6" y="426.3" font-family="Liberation Mono" font-size="7" fill="#555">A</text><rect x="1507.8999999999999" y="418.3" width="7" height="10.5" fill="#14a02a"/><text x="1509.1" y="426.3" font-family="Liberation Mono" font-size="7" fill="#fff">B</text><text x="1515.6" y="426.3" font-family="Liberation Mono" font-size="7" fill="#555">C</text></svg>
<svg style="left:1605px;top:417px" width="20" height="13" viewBox="1605 417 20 13"><text x="1606.6" y="426.3" font-family="Liberation Mono" font-size="7" fill="#555">A</text><rect x="1610.8999999999999" y="418.3" width="7" height="10.5" fill="#14a02a"/><text x="1612.1" y="426.3" font-family="Liberation Mono" font-size="7" fill="#fff">B</text><text x="1618.6" y="426.3" font-family="Liberation Mono" font-size="7" fill="#555">C</text></svg>
<svg style="left:1835px;top:417px" width="20" height="13" viewBox="1835 417 20 13"><text x="1836.5" y="426.3" font-family="Liberation Mono" font-size="7" fill="#555">A</text><rect x="1840.8" y="418.3" width="7" height="10.5" fill="#14a02a"/><text x="1842.0" y="426.3" font-family="Liberation Mono" font-size="7" fill="#fff">B</text><text x="1848.5" y="426.3" font-family="Liberation Mono" font-size="7" fill="#555">C</text></svg>
<svg style="left:1414px;top:420px" width="12" height="6" viewBox="1414 420 12 6"><path d="M1415.7 421.8H1425.2M1415.7 424.2H1425.2" stroke="#666" stroke-width="0.9"/></svg>
<svg style="left:1764px;top:420px" width="12" height="6" viewBox="1764 420 12 6"><path d="M1765.4 421.8H1774.9M1765.4 424.2H1774.9" stroke="#666" stroke-width="0.9"/></svg>
<svg style="left:1389px;top:418px" width="9" height="11" viewBox="1389 418 9 11"><circle cx="1393.4" cy="421.5" r="2.3" fill="#000"/><path d="M1393.4 423V428" stroke="#000" stroke-width="1.3"/></svg>
<svg style="left:12px;top:960px" width="32" height="32" viewBox="12 960 32 32"><rect x="14.1" y="967" width="23.6" height="23.7" rx="1.5" fill="#4d5a72"/><rect x="16" y="968" width="3" height="8" fill="#2e3648"/><rect x="21" y="967.5" width="11" height="9.5" fill="#dde3ee"/><rect x="19" y="981.5" width="15" height="8.5" fill="#f4f6fa"/><rect x="19" y="987" width="15" height="3" fill="#5a9ad8"/><path d="M27.2 971.5H33V966.8L42.4 973.5L33 980.5V976H27.2Z" fill="#78c030" stroke="#4a8a20" stroke-width="0.8"/></svg>
<svg style="left:120px;top:962px" width="34" height="32" viewBox="120 962 34 32"><rect x="128" y="965" width="14" height="12" fill="#f4f6f8" stroke="#9aa4b4" stroke-width="0.8"/><rect x="122" y="975" width="26.6" height="14" rx="3" fill="#c4ccd8" stroke="#8a94a6" stroke-width="0.8"/><rect x="126" y="976" width="18" height="4" rx="1.5" fill="#5a6478"/><rect x="128" y="984" width="14" height="7.5" fill="#f6f8fa" stroke="#8a94a6" stroke-width="0.8"/><rect x="129" y="986" width="12" height="3" fill="#6aaee0"/><circle cx="144.6" cy="970.5" r="7" fill="#78b828" stroke="#4a8818" stroke-width="0.8"/><text x="144.6" y="974.6" font-family="Liberation Sans" font-weight="700" font-size="11" fill="#1c3a10" text-anchor="middle">?</text></svg>
<svg style="left:242px;top:962px" width="34" height="32" viewBox="242 962 34 32"><rect x="249.75" y="965" width="14" height="12" fill="#f4f6f8" stroke="#9aa4b4" stroke-width="0.8"/><rect x="243.75" y="975" width="26.6" height="14" rx="3" fill="#c4ccd8" stroke="#8a94a6" stroke-width="0.8"/><rect x="247.75" y="976" width="18" height="4" rx="1.5" fill="#5a6478"/><rect x="249.75" y="984" width="14" height="7.5" fill="#f6f8fa" stroke="#8a94a6" stroke-width="0.8"/><rect x="250.75" y="986" width="12" height="3" fill="#6aaee0"/><circle cx="266.35" cy="970.5" r="7" fill="#78b828" stroke="#4a8818" stroke-width="0.8"/><text x="266.35" y="974.6" font-family="Liberation Sans" font-weight="700" font-size="11" fill="#1c3a10" text-anchor="middle">?</text></svg>
<svg style="left:366px;top:968px" width="17" height="18" viewBox="366 968 17 18"><rect x="368.5" y="971.5" width="12" height="12" fill="#fff" stroke="#999"/><path d="M369.5 977.8L373.6 982.5L381.5 969.8" fill="none" stroke="#000" stroke-width="1.6"/></svg>
<svg style="left:449px;top:964px" width="28" height="28" viewBox="449 964 28 28"><path d="M454 969L472 987M472 969L454 987" stroke="#b83028" stroke-width="6.4" stroke-linecap="round"/><path d="M454 969L472 987M472 969L454 987" stroke="#d85a50" stroke-width="4" stroke-linecap="round"/></svg>
</body></html>
